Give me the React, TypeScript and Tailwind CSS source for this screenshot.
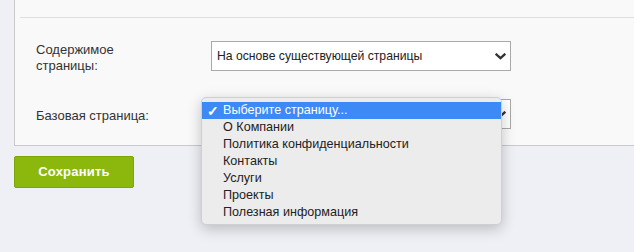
import React from "react";

const items = [
  "О Компании",
  "Политика конфиденциальности",
  "Контакты",
  "Услуги",
  "Проекты",
  "Полезная информация",
];

function Chevron() {
  return (
    <svg width="11" height="7" viewBox="0 0 11 7" className="shrink-0">
      <path d="M1.5 1.5 L5.5 5.2 L9.5 1.5" fill="none" stroke="#333" strokeWidth="2.3" strokeLinecap="square" />
    </svg>
  );
}

export default function App() {
  return (
    <div
      className="w-[634px] h-[252px] bg-[#eff0f5] overflow-hidden relative text-[#333]"
      style={{ fontFamily: '"Liberation Sans", Helvetica, Arial, sans-serif' }}
    >
      <div className="ml-[14px] h-[146px] bg-[#f9f9f9] border-l border-b border-[#c9c9cc]">
        <div className="ml-[5px] h-[18px] border-b border-[#dedede]" />
        <div className="pl-[21px] pt-[23px] flex flex-col gap-[25px]">
          <div className="flex items-start">
            <div className="w-[175px] pt-[1px] text-[13px] leading-[16px]">
              Содержимое
              <br />
              страницы:
            </div>
            <div className="w-[300px] h-[30px] bg-white border border-[#a9a9a9] flex items-center justify-between pl-[5px] pr-[4px] text-[12.2px] text-[#222]">
              <span>На основе существующей страницы</span>
              <Chevron />
            </div>
          </div>
          <div className="flex items-center">
            <div className="w-[175px] pt-[3px] text-[13px] leading-[16px]">Базовая страница:</div>
            <div className="w-[300px] h-[30px] bg-white border border-[#a9a9a9] flex items-center justify-end pr-[4px]">
              <Chevron />
            </div>
          </div>
        </div>
      </div>
      <div className="ml-[14px] mt-[10px] w-[120px] h-[32px] bg-[#8cb80e] border border-[#7ba60a] rounded-[2px] flex items-center justify-center text-white font-bold text-[13px] tracking-[0.2px]">
        Сохранить
      </div>

      <div className="absolute left-[201px] top-[97px] w-[301px] h-[128px] rounded-[5px] bg-[#ececec] border border-[#cfcfcf] shadow-[0_4px_14px_rgba(0,0,0,0.22)] pt-[4px] text-[12.6px] text-[#222]">
        <div className="h-[17px] bg-[#3d89f6] text-white flex items-center">
          <span className="w-[21px] pl-[5px] text-[14px] font-bold leading-none">✓</span>
          <span>Выберите страницу...</span>
        </div>
        {items.map((t) => (
          <div key={t} className="h-[17px] flex items-center pl-[21px]">
            {t}
          </div>
        ))}
      </div>
    </div>
  );
}
